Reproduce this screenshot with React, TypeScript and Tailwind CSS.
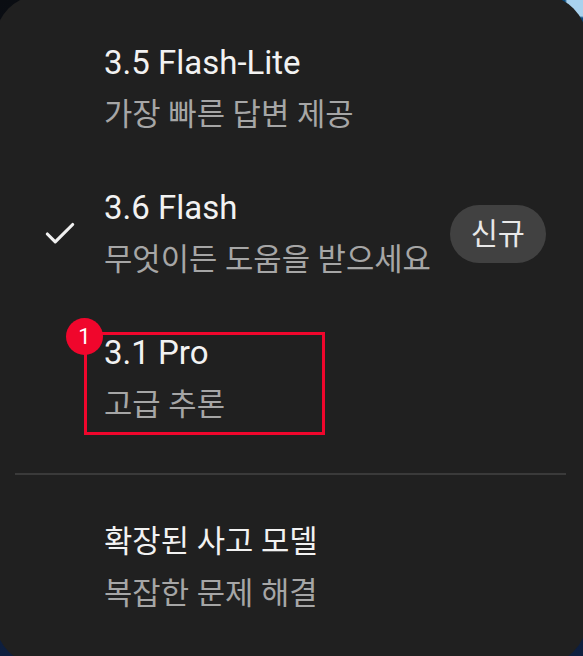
import { Check } from 'lucide-react';

interface ModelItem {
  title: string;
  subtitle: string;
  korean?: boolean;
  selected?: boolean;
  badge?: string;
  marked?: boolean;
}

const models: ModelItem[] = [
  { title: '3.5 Flash-Lite', subtitle: '가장 빠른 답변 제공' },
  { title: '3.6 Flash', subtitle: '무엇이든 도움을 받으세요', selected: true, badge: '신규' },
  { title: '3.1 Pro', subtitle: '고급 추론', marked: true },
];

const font = { fontFamily: 'Roboto, "Noto Sans CJK KR", sans-serif' };

function Row({ item }: { item: ModelItem }) {
  return (
    <div className="flex items-center pl-[46px] pr-[41px]">
      <div className="w-[38px] h-[38px] flex items-center justify-center shrink-0">
        {item.selected && <Check size={38} strokeWidth={2} className="text-[#f0f0f0]" />}
      </div>
      <div className="relative ml-[25px] flex-1 min-w-0">
        <p
          className={`leading-[52px] text-[#f2f2f2] whitespace-nowrap ${item.korean ? 'text-[30.8px]' : 'text-[33px]'}`}
        >
          {item.title}
        </p>
        <p className="leading-[52px] text-[30.8px] text-[#a6a6a6] whitespace-nowrap">{item.subtitle}</p>

        {/* annotation */}
        {item.marked && (
          <div className="absolute left-[-20px] top-[5px] w-[241px] h-[103px] border-[3px] border-[#f0062c]">
            <div className="absolute left-[-21px] top-[-17px] w-[37px] h-[37px] rounded-full bg-[#f0062c] flex items-center justify-center text-white text-[22px] leading-none">
              1
            </div>
          </div>
        )}
      </div>
      {item.badge && (
        <span className="h-[58px] px-[21px] rounded-full bg-[#414141] text-[#e8e8e8] text-[29.5px] flex items-center shrink-0">
          {item.badge}
        </span>
      )}
    </div>
  );
}

export default function App() {
  return (
    <div
      className="w-[583px] h-[656px] overflow-hidden bg-[radial-gradient(circle_at_100%_0%,#a9d2ee_0px,#a9d2ee_16px,#0a4a7b_18px,#0a4a7b_55px,transparent_58px),linear-gradient(180deg,#0a0d12_0%,#0d1930_70%,#0e1f3f_100%)]"
      style={font}
    >
      <div className="-ml-[5px] -mt-[5px] w-[592px] h-[670px] rounded-[46px] bg-[#202020] pt-[42px]">
        <div className="flex flex-col gap-[41px]">
          {models.map(m => (
            <Row key={m.title} item={m} />
          ))}
        </div>

        <div className="mt-[42px] mb-[41px] ml-[20px] mr-[21px] h-[2px] bg-[#3a3a3a]" />

        <Row item={{ title: '확장된 사고 모델', subtitle: '복잡한 문제 해결', korean: true }} />
      </div>
    </div>
  );
}
